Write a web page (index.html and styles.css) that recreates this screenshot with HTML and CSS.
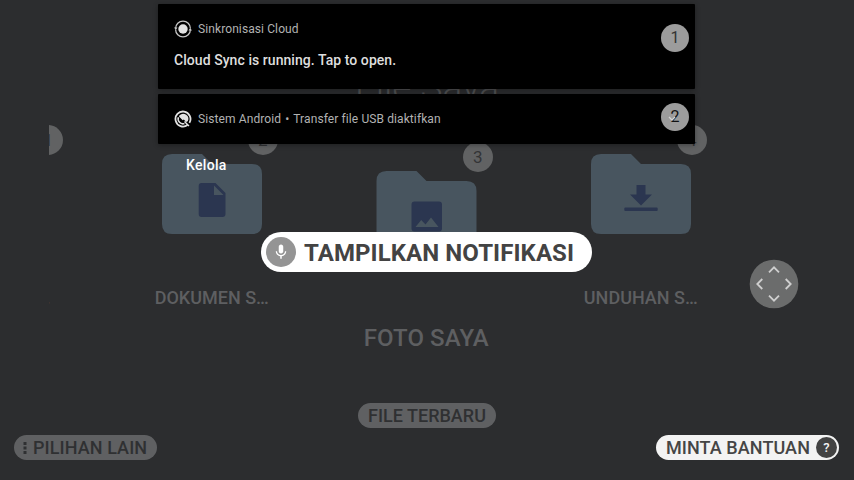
FILE: index.html
```
<!DOCTYPE html>
<html lang="id">
<head>
<meta charset="utf-8">
<title>File Saya</title>
<link rel="stylesheet" href="styles.css">
</head>
<body>
<main class="app">
  <h1 class="app-title">File Saya</h1>
  <div class="carousel">
    <div class="item">
      <div class="tile"><span class="badge">1</span></div>
      <div class="label label-first">…</div>
    </div>
    <div class="item">
      <div class="tile">
        <svg class="folder" viewBox="0 0 100 80"><path class="shape" d="M10 0H40L50 10H90Q100 10 100 20V70Q100 80 90 80H10Q0 80 0 70V10Q0 0 10 0Z"/><path class="glyph" d="M39 29H53.500L63.500 39V60Q63.500 63 60.500 63H39.500Q36.700 63 36.700 60V32Q36.700 29 39.500 29ZM52 31.500V41H61.500Z"/></svg>
        <span class="badge">2</span>
      </div>
      <div class="label">DOKUMEN S…</div>
    </div>
    <div class="item active">
      <div class="tile">
        <svg class="folder" viewBox="0 0 100 80"><path class="shape" d="M10 0H40L50 10H90Q100 10 100 20V70Q100 80 90 80H10Q0 80 0 70V10Q0 0 10 0Z"/><path class="glyph" d="M38 30.500H62.500Q65.500 30.500 65.500 33.500V57.500Q65.500 60.500 62.500 60.500H38Q35 60.500 35 57.500V33.500Q35 30.500 38 30.500ZM39 56H62L54.500 46.500L49 53.500L44.700 49Z"/></svg>
        <span class="badge">3</span>
      </div>
      <div class="label">FOTO SAYA</div>
    </div>
    <div class="item">
      <div class="tile">
        <svg class="folder" viewBox="0 0 100 80"><path class="shape" d="M10 0H40L50 10H90Q100 10 100 20V70Q100 80 90 80H10Q0 80 0 70V10Q0 0 10 0Z"/><path class="glyph" d="M45.500 31H54.500V40.500H61L50 51.500L39 40.500H45.500ZM34.300 53.500H65.700Q66.700 53.500 66.700 54.500V56Q66.700 57 65.700 57H34.300Q33.300 57 33.300 56V54.500Q33.300 53.500 34.300 53.500Z"/></svg>
        <span class="badge">4</span>
      </div>
      <div class="label">UNDUHAN S…</div>
    </div>
  </div>
  <div class="recent"><span class="pill">FILE TERBARU</span></div>
  <footer class="bottom">
    <span class="pill more"><svg class="dots" viewBox="0 0 4 12"><path d="M.5 0h3v3h-3zM.5 4.500h3v3h-3zM.5 9h3v3h-3z"/></svg>PILIHAN LAIN</span>
    <span class="pill help">MINTA BANTUAN<span class="question">?</span></span>
  </footer>
</main>

<section class="shade">
  <article class="card card-large">
    <div class="card-head">
      <svg class="card-icon" viewBox="0 0 18 18"><circle cx="9" cy="9" r="4.700" fill="#e2e2e2"/><g fill="none" stroke="#c4c4c4" stroke-width="1.300"><path d="M1.600 8.500A7.400 7.400 0 0 1 16.400 8.500"/><path d="M16.400 9.500A7.400 7.400 0 0 1 1.600 9.500"/></g><path fill="#c4c4c4" d="M0 7.400h3.500L1.800 10zM14.500 10.600h3.500L16.200 8z"/></svg>
      <span>Sinkronisasi Cloud</span>
    </div>
    <p class="card-text">Cloud Sync is running. Tap to open.</p>
    <span class="number number-dim">1</span>
  </article>
  <article class="card card-small">
    <div class="card-head">
      <svg class="card-icon" viewBox="0 0 18 18"><g fill="none" stroke="#e2e2e2"><path stroke-width="1.800" d="M13.500 15A7.500 7.500 0 1 1 15.400 12.900"/><path stroke-width="1.500" d="M10.500 13.600A4.900 4.900 0 0 1 4.400 7.300"/></g><path fill="#e2e2e2" d="M5.500 5.300A5.200 5.200 0 0 1 13.800 11.300L12.200 11.900L9.800 9.500L8.700 10.200L5 6.500ZM11 11l4.500 4.500-1.200 1L10 12z"/></svg>
      <span>Sistem Android<i class="bullet">•</i>Transfer file USB diaktifkan</span>
    </div>
    <span class="number">2<svg class="chevron" viewBox="0 0 8 5"><path d="M1 1l3 3 3-3"/></svg></span>
  </article>
  <div class="manage">Kelola</div>
</section>

<div class="voice">
  <span class="mic"><svg viewBox="0 0 24 24"><path d="M12 14c1.660 0 2.990-1.340 2.990-3L15 5c0-1.660-1.340-3-3-3S9 3.340 9 5v6c0 1.660 1.340 3 3 3zm5.300-3c0 3-2.540 5.100-5.300 5.100S6.700 14 6.700 11H5c0 3.410 2.720 6.230 6 6.720V21h2v-3.280c3.280-.48 6-3.300 6-6.720h-1.700z"/></svg></span>
  <span class="voice-text">TAMPILKAN NOTIFIKASI</span>
</div>

<svg class="dpad" viewBox="0 0 50 50"><circle cx="25" cy="25" r="24.300"/><path d="M20 13.300l5-5 5 5M20 36.700l5 5 5-5M13.300 20l-5 5 5 5M36.700 20l5 5-5 5"/></svg>
</body>
</html>
```
FILE: styles.css
```
* { box-sizing: border-box; }
body {
  margin: 0;
  width: 854px;
  height: 480px;
  overflow: hidden;
  position: relative;
  background: #2c2d2f;
  font-family: Roboto, sans-serif;
}
.app {
  height: 480px;
  display: flex;
  flex-direction: column;
}
.app-title {
  margin: 0;
  height: 122px;
  padding-top: 64px;
  text-align: center;
  font-size: 37px;
  line-height: 48px;
  font-weight: 300;
  color: #505153;
}
.carousel {
  display: flex;
  height: 270px;
  margin: 0 49px;
  padding-top: 32px;
  overflow: hidden;
}
.item {
  flex: 0 0 214.500px;
  display: flex;
  flex-direction: column;
  align-items: center;
}
.item:first-child { margin-left: -159px; }
.item.active { padding-top: 17px; }
.tile { position: relative; width: 100px; height: 80px; }
.active .tile { width: 101px; }
.folder { display: block; width: 100%; height: 80px; }
.shape { fill: #48555f; }
.glyph { fill: #2b3650; fill-rule: evenodd; }
.badge {
  position: absolute;
  right: -16px;
  top: -29px;
  width: 30px;
  height: 30px;
  border-radius: 50%;
  background: #616263;
  color: #333436;
  font-size: 17px;
  line-height: 30px;
  text-align: center;
}
.label {
  margin-top: 53px;
  font-size: 18px;
  line-height: 22px;
  font-weight: 500;
  color: #5e5f61;
  white-space: nowrap;
}
.label-first { padding-left: 93px; }
.active .label {
  margin-top: 73px;
  font-size: 24px;
  line-height: 28px;
  letter-spacing: .1px;
}
.recent { margin-top: 11px; text-align: center; height: 32px; }
.pill {
  display: inline-flex;
  align-items: center;
  height: 25px;
  padding: 0 10px;
  border-radius: 13px;
  background: #5f6062;
  color: #2f3032;
  font-size: 18px;
  font-weight: 500;
  white-space: nowrap;
}
.bottom {
  display: flex;
  justify-content: space-between;
  padding: 0 15px 0 14px;
}
.more { gap: 6px; padding-left: 9px; letter-spacing: .08px; }
.dots { width: 4px; height: 12px; fill: #2f3032; }
.help { gap: 6px; padding-right: 2px; background: #f3f3f3; color: #454545; letter-spacing: .08px; }
.question {
  width: 21px;
  height: 21px;
  border-radius: 50%;
  background: #434343;
  color: #f3f3f3;
  font-size: 13px;
  line-height: 21px;
  text-align: center;
}
.shade {
  position: absolute;
  left: 158px;
  top: 4px;
  width: 537px;
  display: flex;
  flex-direction: column;
  gap: 5px;
}
.card {
  position: relative;
  padding: 16px;
  background: #000;
  border-radius: 1px;
  box-shadow: 0 1px 5px rgba(0, 0, 0, .35);
}
.card-large { height: 85px; }
.card-small { height: 50px; }
.card-head {
  display: flex;
  align-items: center;
  gap: 6px;
  height: 18px;
  font-size: 12px;
  letter-spacing: .1px;
  color: #b2b2b2;
  white-space: nowrap;
}
.card-icon { width: 18px; height: 18px; }
.bullet { margin: 0 4px; font-style: normal; }
.card-text {
  margin: 14px 0 0;
  font-size: 14px;
  line-height: 17px;
  font-weight: 500;
  letter-spacing: .06px;
  color: #dedede;
}
.number {
  position: absolute;
  right: 6px;
  top: 9px;
  width: 28px;
  height: 28px;
  border-radius: 50%;
  background: #9c9c9c;
  color: #111;
  font-size: 16px;
  line-height: 27px;
  text-align: center;
}
.number-dim { top: 20px; color: #333; }
.chevron {
  position: absolute;
  left: 7px;
  top: 13px;
  width: 8px;
  height: 5px;
  fill: none;
  stroke: #d5d5d5;
  stroke-width: 1.300;
}
.manage {
  margin: 7px 0 0 28px;
  font-size: 14px;
  line-height: 18px;
  font-weight: 500;
  letter-spacing: .3px;
  color: #fff;
}
.voice {
  position: absolute;
  left: 261px;
  top: 232px;
  width: 331px;
  height: 40px;
  padding-left: 5px;
  display: flex;
  align-items: center;
  gap: 8px;
  border-radius: 20px;
  background: #fff;
  color: #434343;
  font-size: 24px;
  font-weight: 700;
  letter-spacing: .08px;
  white-space: nowrap;
}
.voice-text { padding-top: 2px; }
.mic {
  display: flex;
  align-items: center;
  justify-content: center;
  width: 30px;
  height: 30px;
  border-radius: 50%;
  background: #949494;
}
.mic svg { width: 18px; height: 18px; fill: #fff; }
.dpad { position: absolute; left: 749px; top: 259px; width: 50px; height: 50px; }
.dpad circle { fill: #6b6c6c; }
.dpad path { fill: none; stroke: #cfcfcf; stroke-width: 1.800; }
```
